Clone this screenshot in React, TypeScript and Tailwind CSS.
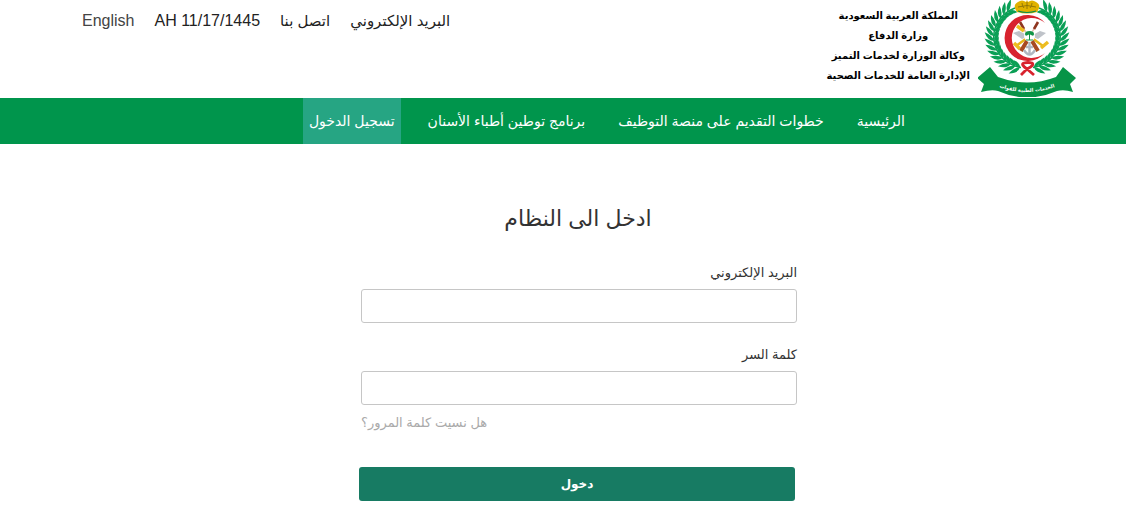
import { useId } from "react";

const topLinks = [
    { label: "البريد الإلكتروني", href: "#mail" },
    { label: "اتصل بنا", href: "#contact" },
];

const navItems = [
    { label: "الرئيسية", href: "#home", active: false },
    { label: "خطوات التقديم على منصة التوظيف", href: "#steps", active: false },
    { label: "برنامج توطين أطباء الأسنان", href: "#dentists", active: false },
    { label: "تسجيل الدخول", href: "#login", active: true },
];

const organisation = [
    "المملكة العربية السعودية",
    "وزارة الدفاع",
    "وكالة الوزارة لخدمات التميز",
    "الإدارة العامة للخدمات الصحية",
];

// Leaves grow in pairs along a stem that runs from the knot up to the crown
const LEAVES = Array.from({ length: 16 }, (_, i) => {
    const deg = 102 + i * 8.8;
    const rad = (deg * Math.PI) / 180;
    return { deg, x: 49 + 33 * Math.cos(rad), y: 37 + 31 * Math.sin(rad) };
});

function Branch() {
    return (
        <g fill="#0a9f55">
            <path d="M43 67.500A33 31 0 0 1 37 8" fill="none" stroke="#0a9f55" strokeWidth="1.5" />
            {LEAVES.map(({ deg, x, y }) => (
                <g key={deg} transform={`translate(${x} ${y}) rotate(${deg + 90})`}>
                    <path d="M0 0Q5-4.500 13 0Q5 3 0 0Z" transform="rotate(-40)" />
                    <path d="M0 0Q4-4 10 0Q4 3 0 0Z" transform="rotate(36)" />
                </g>
            ))}
        </g>
    );
}

function Emblem() {
    const arc = useId();
    return (
        <svg viewBox="0 0 98 97" className="h-[97px] w-[98px] shrink-0" role="img" aria-label="شعار الخدمات الطبية">
            <Branch />
            <g transform="matrix(-1 0 0 1 98 0)">
                <Branch />
            </g>
            <circle cx="49" cy="38" r="24" fill="#fff" />

            {/* Crown */}
            <path d="M39 12Q34 5 40 2Q44-1 48 2L49 0L50 2Q54-1 58 2Q64 5 59 12Q49 15 39 12Z" fill="#e0b100" />
            <path d="M40 7Q49 4 58 7M44 3Q44 6 46 8M54 3Q54 6 52 8M49 2V9" fill="none" stroke="#8a7208" strokeWidth="0.9" />
            <path d="M40 11Q49 14 58 11" fill="none" stroke="#0a8f4b" strokeWidth="1.2" />

            {/* Crescent */}
            <path d="M67 23A23 23 0 1 0 67 53A20 20 0 1 1 67 23Z" fill="#d8232e" />

            {/* Crossed tools */}
            <path d="M44 26L50 36M58 25L52 36" stroke="#e0b9a8" strokeWidth="1.5" />
            <path d="M42 22L46 29M60 22L56 29" stroke="#8f3620" strokeWidth="2.6" />
            <path d="M35 33L41 31L51 36L44 39ZM68 33L62 31L53 36L60 39Z" fill="#bfc3c9" />
            <path d="M49 38L38 46M54 38L65 46" stroke="#e7b718" strokeWidth="2.4" />
            <path d="M36 43L42 49M39 26L46 31M63 48L70 42" stroke="#edbd21" strokeWidth="3.4" />
            <path d="M49 41L43 51M54 41L60 51" stroke="#a84a22" strokeWidth="4" />
            <path d="M51.500 42V55M46 50Q51.500 59 57 50M48 47H55" stroke="#b0b6bf" strokeWidth="2.4" fill="none" />
            <circle cx="51.500" cy="36" r="5.500" fill="#fff" />
            <path d="M51 34.500Q47 37 47 34Q47 31 51.500 31Q56 31 56 34Q56 37 52 34.500V40H51Z" fill="#129447" />
            <path d="M48 40H55" stroke="#129447" />

            {/* Ribbon knot */}
            <path d="M49 69Q42 64 46 63Q50 62 54 63Q57 65 49 69L43 75M49 69L56 75" fill="none" stroke="#d8232e" strokeWidth="2.800" />

            {/* Banner */}
            <path d="M12 67L-1 78L6 84L3 92Q14 89 20 91Q49 104 79 91Q86 89 95 92L92 84L98 78L85 67L78 77Q49 88 20 77Z" fill="#079447" />
            <path id={arc} d="M11 83Q49 101 87 83" fill="none" />
            <text
                fill="#fff"
                fontSize="5"
                fontFamily="DejaVu Sans, sans-serif"
                fontWeight="700"
                textAnchor="middle"
                direction="rtl"
            >
                <textPath href={`#${arc}`} startOffset="50%">الخدمات الطبية للقوات</textPath>
            </text>
        </svg>
    );
}

function Header() {
    return (
        <header className="flex h-[98px] items-start justify-between pr-[50px] pl-[82px]">
            <div className="flex gap-2">
                <Emblem />
                <div className="pt-1.5 text-center text-[10px] leading-5 font-bold whitespace-nowrap text-black">
                    {organisation.map((line) => (
                        <p key={line}>{line}</p>
                    ))}
                </div>
            </div>
            <div className="flex items-center gap-5 pt-[9px] text-[15px] leading-6 whitespace-nowrap text-[#222]">
                {topLinks.map((link) => (
                    <a key={link.href} href={link.href}>
                        {link.label}
                    </a>
                ))}
                <span dir="ltr" className="text-base">AH 11/17/1445</span>
                <a href="#en" lang="en" className="text-base text-[#444]">
                    English
                </a>
            </div>
        </header>
    );
}

function Navigation() {
    return (
        <nav className="flex h-[46px] gap-[21px] bg-[#00954c] pr-[215px] text-sm whitespace-nowrap text-white">
            {navItems.map((item) => (
                <a
                    key={item.href}
                    href={item.href}
                    aria-current={item.active ? "page" : undefined}
                    className={`flex items-center px-1.5 ${item.active ? "bg-[#26a583]" : ""}`}
                >
                    {item.label}
                </a>
            ))}
        </nav>
    );
}

function Field({ id, label, type }: { id: string; label: string; type: string }) {
    return (
        <div>
            <label htmlFor={id} className="block text-[13px] leading-8 text-[#333]">
                {label}
            </label>
            <input
                id={id}
                type={type}
                className="block h-[34px] w-full rounded-[3px] border border-[#c6c6c6] bg-white px-3 text-sm outline-none"
            />
        </div>
    );
}

export default function App() {
    return (
        <div dir="rtl" lang="ar" className="bg-white font-['Liberation_Sans','DejaVu_Sans',sans-serif]">
            <Header />
            <Navigation />
            <main className="pr-[329px] pl-[359px]">
                <h1 className="pt-[57px] text-center text-[22px] leading-9 text-[#333]">ادخل الى النظام</h1>
                <form className="pt-5" onSubmit={(e) => e.preventDefault()}>
                    <div className="flex flex-col gap-4 pl-0.5">
                        <Field id="email" label="البريد الإلكتروني" type="email" />
                        <Field id="password" label="كلمة السر" type="password" />
                    </div>
                    <div className="flex justify-end pt-2 pl-0.5">
                        <a href="#forgot" className="text-[13px] leading-5 text-[#aaa]">
                            هل نسيت كلمة المرور؟
                        </a>
                    </div>
                    <div className="pt-[34px] pr-0.5">
                        <button
                            type="submit"
                            className="block h-[34px] w-full rounded-[3px] bg-[#177b63] text-xs font-bold text-white"
                        >
                            دخول
                        </button>
                    </div>
                </form>
            </main>
        </div>
    );
}
